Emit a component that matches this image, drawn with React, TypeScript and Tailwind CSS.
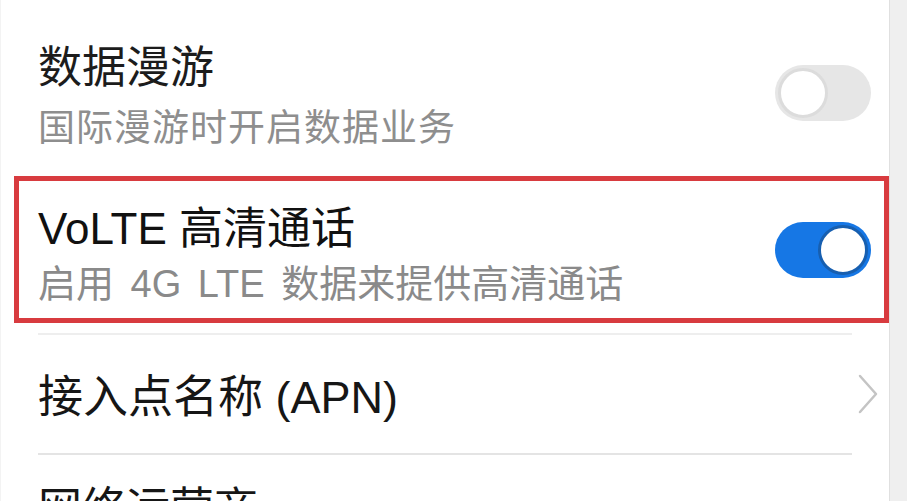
import React from 'react'

const font = { fontFamily: '"Liberation Sans", "Noto Sans CJK SC", sans-serif' }

function Toggle({ on }: { on: boolean }) {
  return (
    <div
      className={
        on
          ? 'flex h-[56px] w-[96px] shrink-0 items-center justify-end rounded-full bg-[#1677e5] px-[3px]'
          : 'flex h-[56px] w-[96px] shrink-0 items-center justify-start rounded-full bg-[#e6e6e6] px-[3px]'
      }
    >
      <div
        className={
          on
            ? 'h-[50px] w-[50px] rounded-full border-[3px] border-[#175fb0] bg-white'
            : 'h-[50px] w-[50px] rounded-full border-[3px] border-[#dcdcdc] bg-white'
        }
      />
    </div>
  )
}

function Chevron() {
  return (
    <svg width="22" height="42" viewBox="0 0 22 42" fill="none">
      <polyline points="3,3 19,21 3,39" stroke="#c4c4c4" strokeWidth="2.5" strokeLinecap="round" strokeLinejoin="round" />
    </svg>
  )
}

export default function App() {
  return (
    <div className="flex h-[501px] w-[907px] overflow-hidden bg-white" style={font}>
      <div className="flex w-[889px] shrink-0 flex-col border-l border-[#f3f3f3]">
        {/* 数据漫游 */}
        <div className="flex h-[176px] shrink-0 items-center pl-[37px] pr-[18px]">
          <div className="flex flex-1 flex-col pt-[16px]">
            <span className="text-[44px] leading-none text-[#1c1c1c]">数据漫游</span>
            <span className="mt-[20px] text-[37px] leading-none tracking-[1px] text-[#8e8e8e]">国际漫游时开启数据业务</span>
          </div>
          <div className="pt-[10px]">
            <Toggle on={false} />
          </div>
        </div>

        {/* VoLTE */}
        <div className="ml-[13px] flex h-[147px] shrink-0 items-center border-[5px] border-[#d83b3f] pl-[19px] pr-[13px]">
          <div className="flex flex-1 flex-col pt-[10px]">
            <span className="text-[44px] leading-none text-[#111]">VoLTE 高清通话</span>
            <span className="mt-[14px] text-[38px] leading-none text-[#8a8a8a] [word-spacing:6px]">启用 4G LTE 数据来提供高清通话</span>
          </div>
          <Toggle on={true} />
        </div>

        <div className="mx-[37px] mt-[10px] h-[2px] shrink-0 bg-[#eeeeee]" />

        {/* APN */}
        <div className="flex h-[118px] shrink-0 items-center pl-[37px] pr-[10px]">
          <span className="flex-1 pt-[6px] text-[45px] leading-none text-[#161616]">接入点名称 (APN)</span>
          <Chevron />
        </div>

        <div className="mx-[37px] h-[2px] shrink-0 bg-[#e4e4e4]" />

        <div className="shrink-0 pl-[37px] pt-[32px]">
          <span className="text-[44px] leading-none text-[#161616]">网络运营商</span>
        </div>
      </div>
      <div className="flex-1 border-l border-[#e0e0e0] bg-[#efefef]" />
    </div>
  )
}
